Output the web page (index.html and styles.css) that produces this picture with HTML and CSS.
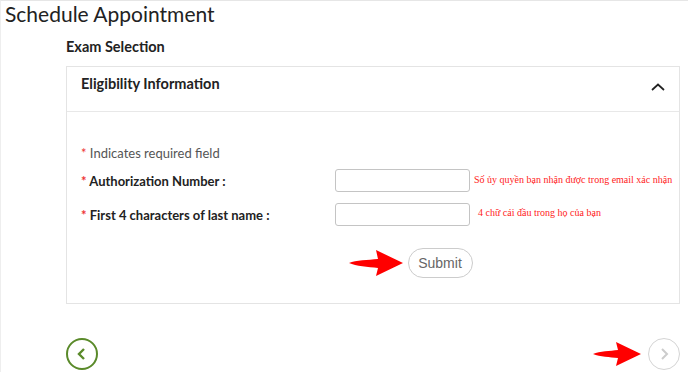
FILE: index.html
```html
<!DOCTYPE html>
<html lang="en">
<head>
    <meta charset="UTF-8">
    <meta name="viewport" content="width=device-width, initial-scale=1.0">
    <title>Schedule Appointment</title>
    <link rel="stylesheet" href="styles.css">
</head>
<body>
    <div class="page">
        <h1>Schedule Appointment</h1>
        <div class="content">
            <h3>Exam Selection</h3>
            <div class="card">
                <div class="card-header">
                    <span>Eligibility Information</span>
                    <svg class="chevron" width="16" height="10" viewBox="0 0 16 10">
                        <path d="M2 8 L8 2.5 L14 8" fill="none" stroke="#222" stroke-width="1.7"/>
                    </svg>
                </div>
                <div class="card-body">
                    <p class="note"><span class="req">*</span> Indicates required field</p>
                    <div class="row">
                        <label for="auth"><span class="req">*</span> Authorization Number :</label>
                        <input type="text" id="auth">
                        <span class="hint">Số ủy quyền bạn nhận được trong email xác nhận</span>
                    </div>
                    <div class="row">
                        <label for="lname"><span class="req">*</span> First 4 characters of last name :</label>
                        <input type="text" id="lname">
                        <span class="hint hint-2">4 chữ cái đầu trong họ của bạn</span>
                    </div>
                    <div class="actions">
                        <svg class="arrow arrow-submit" width="56" height="30" viewBox="0 0 56 30">
                            <path d="M1 15 C8 12 20 12 30 11 L28 2 L55 15 L28 28 L30 20 C20 19 8 18 1 15 Z" fill="#f00"/>
                        </svg>
                        <button type="button" class="submit">Submit</button>
                    </div>
                </div>
            </div>
        </div>
        <div class="nav">
            <button type="button" class="circle back">
                <svg width="12" height="14" viewBox="0 0 12 14"><path d="M8 2 L3 7 L8 12" fill="none" stroke="#5a8a2a" stroke-width="2.4"/></svg>
            </button>
            <div class="next-wrap">
                <svg class="arrow" width="50" height="28" viewBox="0 0 50 28">
                    <path d="M1 14 C8 11 18 11 26 10 L24 2 L49 14 L24 26 L26 18 C18 17 8 17 1 14 Z" fill="#f00"/>
                </svg>
                <button type="button" class="circle next">
                    <svg width="12" height="14" viewBox="0 0 12 14"><path d="M4 2 L9 7 L4 12" fill="none" stroke="#ccc" stroke-width="2"/></svg>
                </button>
            </div>
        </div>
    </div>
</body>
</html>
```

FILE: styles.css
```css
body {
    margin: 0;
    font-family: Lato, "Open Sans", sans-serif;
    color: #222;
    background-color: #fff;
}
.page {
    width: 688px;
    height: 372px;
    border-top: 1px solid #e6e6e6;
    border-left: 1px solid #eee;
    box-sizing: border-box;
    overflow: hidden;
}
.page h1 {
    margin: 0;
    padding: 0 0 0 4px;
    font-size: 21px;
    font-weight: 400;
    line-height: 26px;
    color: #222;
}
.content {
    margin-left: 65px;
    width: 614px;
}
.content h3 {
    margin: 8px 0 0;
    font-size: 14.5px;
    font-weight: 700;
    line-height: 24px;
}
.card {
    margin-top: 7px;
    border: 1px solid #e4e4e4;
    height: 238px;
    box-sizing: border-box;
}
.card-header {
    height: 45px;
    border-bottom: 1px solid #e8e8e8;
    display: flex;
    align-items: center;
    justify-content: space-between;
    padding: 0 14px;
    font-size: 14.5px;
    font-weight: 700;
    box-sizing: border-box;
}
.card-header span {
    margin-top: -12px;
}
.chevron {
    margin-top: -4px;
    margin-right: -1px;
}
.card-body {
    padding: 32px 14px 0;
}
.note {
    margin: 0 0 7px;
    font-size: 13px;
    color: #555;
    line-height: 18px;
}
.req {
    color: #e33;
}
.row {
    display: flex;
    align-items: center;
    height: 23px;
    margin-bottom: 11px;
}
.row label {
    flex-shrink: 0;
    width: 254px;
    font-size: 13px;
    font-weight: 700;
    color: #222;
}
.row input {
    flex-shrink: 0;
    width: 135px;
    height: 23px;
    box-sizing: border-box;
    border: 1px solid #c4c4c4;
    border-radius: 3px;
    margin: 0;
    padding: 2px 4px;
}
.hint {
    margin-left: 4px;
    font-family: "Liberation Serif", serif;
    font-size: 10px;
    color: #f22;
    white-space: nowrap;
    margin-top: -2px;
}
.hint-2 {
    margin-left: 8px;
    margin-top: -4px;
}
.actions {
    display: flex;
    justify-content: center;
    align-items: center;
    margin-top: 22px;
    margin-left: 74px;
}
.arrow-submit {
    margin-right: 4px;
}
.submit {
    width: 65px;
    height: 30px;
    border: 1px solid #ccc;
    border-radius: 15px;
    background-color: #fff;
    font-family: "Liberation Sans", Arial, sans-serif;
    font-size: 14px;
    color: #666;
    padding: 0;
}
.nav {
    display: flex;
    justify-content: space-between;
    align-items: center;
    margin-top: 34px;
    padding: 0 8px 0 65px;
}
.circle {
    width: 32px;
    height: 32px;
    border-radius: 50%;
    background-color: #fff;
    display: flex;
    align-items: center;
    justify-content: center;
    padding: 0;
}
.back {
    border: 2px solid #5a8a2a;
}
.next {
    border: 1.5px solid #d4d4d4;
}
.next-wrap {
    display: flex;
    align-items: center;
    gap: 6px;
}
```
